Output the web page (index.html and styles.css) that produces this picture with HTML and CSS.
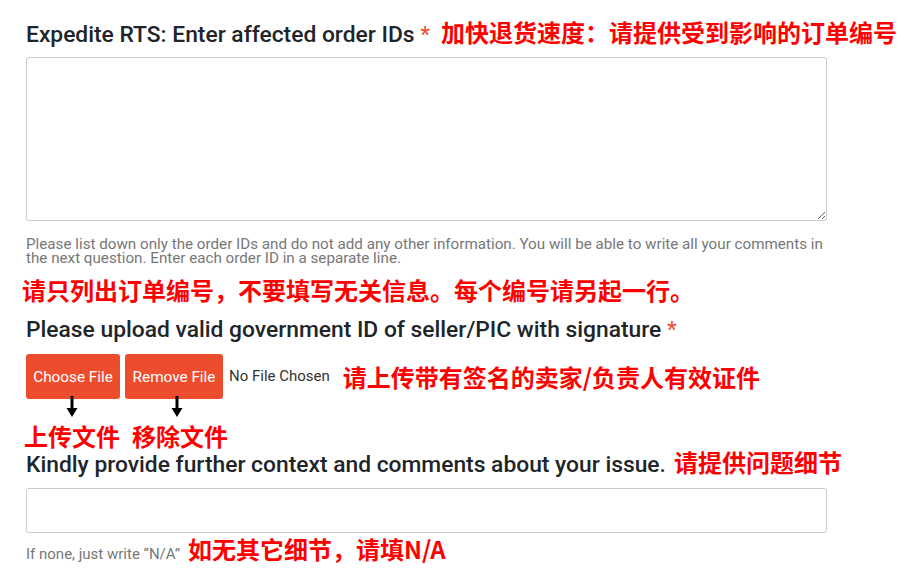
FILE: index.html
```html
<!DOCTYPE html>
<html lang="zh-CN">
<head>
<meta charset="utf-8">
<title>Expedite RTS form</title>
<link rel="stylesheet" href="styles.css">
</head>
<body>
<div class="form">
  <div class="title title-first"><span>Expedite RTS: Enter affected order IDs</span> <span class="req">*</span><span class="cn cn-title1">加快退货速度：请提供受到影响的订单编号</span></div>
  <textarea class="ta"></textarea>
  <p class="help">Please list down only the order IDs and do not add any other information. You will be able to write all your comments in the next question. Enter each order ID in a separate line.</p>
  <div class="cn cn-block cn-note">请只列出订单编号，不要填写无关信息。每个编号请另起一行。</div>
  <div class="title title-upload">Please upload valid government ID of seller/PIC with signature <span class="req">*</span></div>
  <div class="upload-row">
    <div class="btn-col">
      <button class="btn btn-choose" type="button">Choose File</button>
      <svg class="arrow arrow-a" width="12" height="21" viewBox="0 0 12 21"><rect x="4.5" y="0" width="3" height="13" fill="#000"/><polygon points="0.5,12 11.5,12 6,21" fill="#000"/></svg>
    </div>
    <div class="btn-col">
      <button class="btn btn-remove" type="button">Remove File</button>
      <svg class="arrow arrow-b" width="12" height="21" viewBox="0 0 12 21"><rect x="4.5" y="0" width="3" height="13" fill="#000"/><polygon points="0.5,12 11.5,12 6,21" fill="#000"/></svg>
    </div>
    <span class="nofile">No File Chosen</span>
    <span class="cn cn-upload">请上传带有签名的卖家/负责人有效证件</span>
  </div>
  <div class="cn cn-block cn-labels"><span>上传文件</span><span class="cn-remove">移除文件</span></div>
  <div class="title title-kindly"><span>Kindly provide further context and comments about your issue.</span><span class="cn cn-kindly">请提供问题细节</span></div>
  <input class="inp" type="text">
  <div class="hint-row"><span class="hint">If none, just write “N/A”</span><span class="cn cn-hint">如无其它细节，请填N/A</span></div>
</div>
</body>
</html>
```
FILE: styles.css
```css
html, body {
  margin: 0;
  padding: 0;
  background: #ffffff;
}

body {
  font-family: Roboto, "Noto Sans", "Noto Sans CJK SC", sans-serif;
  color: #222222;
}

.form {
  padding: 21px 0 0 26px;
  width: 801px;
}

.title {
  font-size: 22.8px;
  font-weight: 500;
  line-height: 28px;
  color: #212529;
  white-space: nowrap;
}

.req {
  color: #ee4d2d;
  font-weight: 400;
}

.cn {
  font-family: "Noto Sans CJK SC", sans-serif;
  font-weight: 700;
  color: #ff0000;
  font-size: 24px;
  line-height: 20px;
}

.cn-block {
  line-height: 28px;
}

.cn-title1 {
  margin-left: 11px;
}

.ta {
  display: block;
  box-sizing: border-box;
  width: 801px;
  height: 164px;
  margin: 8px 0 0 0;
  border: 1px solid #cccccc;
  border-radius: 3px;
  background: #fff;
  padding: 6px 10px;
  font-family: Roboto, sans-serif;
}

.help {
  margin: 16px 0 0 0;
  font-size: 15.2px;
  line-height: 14px;
  color: #777777;
  width: 801px;
}

.cn-note {
  margin: 11px 0 0 -4px;
}

.title-upload {
  margin-top: 12px;
}

.upload-row {
  display: flex;
  align-items: flex-start;
  margin-top: 10px;
}

.btn-col {
  display: flex;
  flex-direction: column;
  align-items: center;
}

.btn-col + .btn-col {
  margin-left: 5px;
}

.btn {
  height: 45px;
  border: none;
  border-radius: 3px;
  background: #ee4d2d;
  color: #ffffff;
  font-family: Roboto, sans-serif;
  font-size: 15.3px;
  padding: 0;
  margin: 0;
  white-space: nowrap;
}

.btn-choose {
  width: 94px;
}

.btn-remove {
  width: 98px;
}

.arrow {
  display: block;
  margin-top: -3px;
}

.arrow-a {
  margin-right: 3px;
}

.arrow-b {
  margin-left: 6px;
}

.nofile {
  font-size: 15px;
  line-height: 45px;
  color: #333333;
  margin-left: 6px;
}

.cn-upload {
  line-height: 45px;
  margin-left: 13px;
}

.cn-labels {
  margin: 5px 0 0 -2px;
}

.cn-remove {
  margin-left: 12px;
}

.title-kindly {
  margin-top: 1px;
}

.cn-kindly {
  margin-left: 8px;
}

.inp {
  display: block;
  box-sizing: border-box;
  width: 801px;
  height: 45px;
  margin: 9px 0 0 0;
  border: 1px solid #cccccc;
  border-radius: 3px;
  background: #fff;
  padding: 0 10px;
}

.hint-row {
  margin-top: 6px;
  font-size: 15px;
  line-height: 28px;
  white-space: nowrap;
}

.hint {
  font-size: 15px;
  color: #777777;
}

.cn-hint {
  margin-left: 8px;
}
```
